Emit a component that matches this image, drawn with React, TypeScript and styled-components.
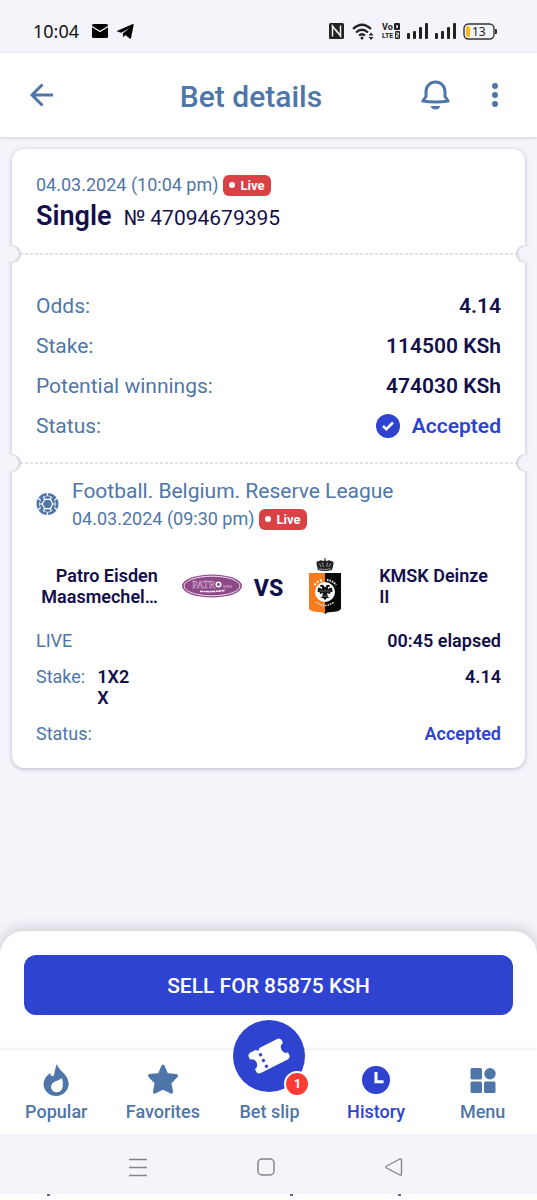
import React from "react";
import styled, { createGlobalStyle } from "styled-components";

const c = {
  page: "#f4f5fa",
  steel: "#4f76a8",
  navy: "#130f4b",
  blue: "#2e43d0",
  red: "#d94144",
};

const GlobalStyle = createGlobalStyle`
  *, *::before, *::after { box-sizing: border-box; }
  body { margin: 0; background: ${c.page}; font-family: Roboto, "Liberation Sans", sans-serif; color: ${c.navy}; }
  button { font-family: inherit; border: 0; padding: 0; background: none; cursor: pointer; }
  svg { display: block; flex: none; }
  h1, h2, p, dl, dd { margin: 0; }
`;

const Page = styled.div`
  min-height: 100vh;
  display: flex;
  flex-direction: column;
`;

const StatusBar = styled.div`
  height: 53px;
  padding: 9px 39px 0 33px;
  display: flex;
  align-items: center;
  justify-content: space-between;
  font: 400 18px/24px "Noto Sans", "Open Sans", sans-serif;
  color: #111;
`;

const StatusGroup = styled.div<{ $gap: number }>`
  display: flex;
  align-items: center;
  gap: ${(p) => p.$gap}px;
`;

const Clock = styled.span`
  margin-right: 4px;
`;

const Header = styled.header`
  height: 84px;
  padding-right: 30px;
  display: flex;
  align-items: center;
  background: #fff;
  box-shadow: 0 1px 3px rgba(30, 30, 60, 0.16);
`;

const HeaderButton = styled.button<{ $width: number }>`
  width: ${(p) => p.$width}px;
  height: 48px;
  display: flex;
  align-items: center;
  justify-content: center;
  color: ${c.steel};
`;

const Actions = styled.div`
  display: flex;
  gap: 32px;
`;

const Title = styled.h1`
  flex: 1;
  padding-top: 4px;
  text-align: center;
  font-size: 30px;
  line-height: 36px;
  font-weight: 500;
  color: ${c.steel};
`;

const Main = styled.main`
  flex: 1;
  padding: 12px 12px 24px;
`;

const Card = styled.article`
  background: #fff;
  border-radius: 12px;
  box-shadow: 0 1px 4px rgba(30, 30, 60, 0.28);
`;

const Summary = styled.section`
  padding: 24px 24px 18px;
`;

const DateRow = styled.div`
  display: flex;
  align-items: center;
  gap: 4px;
  height: 24px;
  font-size: 18px;
  line-height: 24px;
  color: ${c.steel};
`;

const LiveBadge = styled.span`
  height: 21px;
  padding: 0 6px;
  display: inline-flex;
  align-items: center;
  gap: 6px;
  border-radius: 6px;
  background: ${c.red};
  color: #fff;
  font-size: 13px;
  line-height: 21px;
  font-weight: 700;

  &::before {
    content: "";
    width: 6px;
    height: 6px;
    border-radius: 50%;
    background: #fff;
  }
`;

const BetTitle = styled.div`
  display: flex;
  align-items: baseline;
  gap: 12px;
  height: 38px;
  line-height: 38px;
`;

const BetKind = styled.h2`
  font-size: 27px;
  line-height: 38px;
  font-weight: 600;
`;

const BetNumber = styled.span`
  font-size: 21px;
`;

const TearLine = styled.div`
  position: relative;
  height: 2px;
  margin: 0 8px;
  background: repeating-linear-gradient(90deg, #e0e1ea 0 3px, transparent 3px 5px);

  &::before,
  &::after {
    content: "";
    position: absolute;
    top: -8px;
    width: 18px;
    height: 18px;
    border-radius: 50%;
    background: ${c.page};
  }
  &::before { left: -17px; box-shadow: inset -2px 0 2px rgba(30, 30, 60, 0.16); }
  &::after { right: -17px; box-shadow: inset 2px 0 2px rgba(30, 30, 60, 0.16); }
`;

const Totals = styled.dl`
  padding: 31px 24px 16px;
`;

const TotalRow = styled.div`
  height: 40px;
  display: flex;
  align-items: center;
  justify-content: space-between;
  font-size: 21px;
  line-height: 26px;
`;

const Label = styled.dt`
  color: ${c.steel};
`;

const Value = styled.dd<{ $accent?: boolean }>`
  display: flex;
  align-items: center;
  gap: 12px;
  font-weight: 600;
  color: ${(p) => (p.$accent ? c.blue : c.navy)};
`;

const Event = styled.section`
  padding: 12px 24px 24px;
`;

const League = styled.div`
  display: flex;
  align-items: center;
  gap: 13px;
`;

const LeagueName = styled.h2`
  font-size: 21px;
  line-height: 31px;
  font-weight: 400;
  color: ${c.steel};
`;

const Match = styled.div`
  margin-top: 25px;
  display: grid;
  grid-template-columns: minmax(0, 1fr) 60px auto 60px minmax(0, 1fr);
  align-items: center;
  height: 60px;
`;

const Team = styled.p<{ $side: "home" | "away" }>`
  text-align: ${(p) => (p.$side === "home" ? "right" : "left")};
  padding: ${(p) => (p.$side === "home" ? "0 24px 0 0" : "0 0 0 24px")};
  font-size: 18px;
  line-height: 21px;
  font-weight: 600;
  white-space: nowrap;
`;

const Crest = styled.div`
  display: flex;
  justify-content: center;
`;

const Versus = styled.span`
  padding: 6px 12px 0;
  font-size: 23px;
  line-height: 28px;
  font-weight: 800;
  text-align: center;
`;

const Facts = styled.dl`
  display: flex;
  flex-direction: column;
  gap: 15px;
  padding-top: 14px;
`;

const FactRow = styled.div`
  display: flex;
  align-items: flex-start;
  justify-content: space-between;
  font-size: 18px;
  line-height: 21px;
`;

const Pick = styled.div`
  display: flex;
  gap: 12px;
`;

const PickValue = styled.dd`
  font-weight: 600;
`;

const SellSheet = styled.section`
  padding: 24px 24px 35px;
  background: #fff;
  border-radius: 24px 24px 0 0;
  box-shadow: 0 -2px 14px rgba(30, 30, 50, 0.2);
`;

const SellButton = styled.button`
  width: 100%;
  height: 60px;
  padding-top: 2px;
  border-radius: 12px;
  background: ${c.blue};
  color: #fff;
  font-size: 21px;
  line-height: 24px;
  font-weight: 500;
`;

const Nav = styled.nav`
  position: relative;
  height: 84px;
  padding: 0 1px 10px 3px;
  display: grid;
  grid-template-columns: repeat(5, 1fr);
  align-items: end;
  background: #fff;
  box-shadow: 0 -1px 3px rgba(30, 30, 60, 0.1);
`;

const NavItem = styled.a<{ $active?: boolean; $raised?: boolean }>`
  display: flex;
  flex-direction: column;
  align-items: center;
  gap: ${(p) => (p.$raised ? 8 : 4)}px;
  margin-top: ${(p) => (p.$raised ? -30 : 0)}px;
  font-size: 18px;
  line-height: 24px;
  font-weight: 500;
  text-decoration: none;
  color: ${(p) => (p.$active ? c.blue : c.steel)};
`;

const SlipCircle = styled.span`
  position: relative;
  width: 72px;
  height: 72px;
  display: flex;
  align-items: center;
  justify-content: center;
  border-radius: 50%;
  background: ${c.blue};
`;

const SlipCount = styled.span`
  position: absolute;
  right: -5px;
  bottom: -5px;
  width: 26px;
  height: 26px;
  border: 2px solid #fff;
  border-radius: 50%;
  background: #fb3b34;
  color: #fff;
  font-size: 13px;
  line-height: 22px;
  font-weight: 700;
  text-align: center;
`;

const SystemBar = styled.div`
  height: 60px;
  display: grid;
  grid-template-columns: 1fr 28px 1fr;
  align-items: center;
  padding: 6px 129px 0 124px;
`;

const SystemButton = styled.button<{ $align: "start" | "center" | "end" }>`
  width: 28px;
  height: 28px;
  display: flex;
  align-items: center;
  justify-content: center;
  justify-self: ${(p) => p.$align};
`;

const BottomEdge = styled.div`
  height: 6px;
  padding: 0 136px 0 47px;
  display: grid;
  grid-template-columns: 9fr 4fr 3px;
  background: #fff;
`;

const Speck = styled.span`
  width: 3px;
  height: 2px;
  background: #5c668f;
`;

const SignalIcon = () => (
  <svg width="21" height="16" viewBox="0 0 21 16" fill="#222">
    <rect x="0" y="10" width="3" height="6" rx="1" />
    <rect x="6" y="8" width="3" height="8" rx="1" />
    <rect x="12" y="4" width="3" height="12" rx="1" />
    <rect x="18" y="0" width="3" height="16" rx="1" />
  </svg>
);

const VolteIcon = () => (
  <svg width="18" height="18" viewBox="0 -1 18 18" fill="#222" fontFamily="'Liberation Sans Narrow', Roboto, sans-serif" fontWeight="700">
    <text x="0" y="7" fontSize="9">Vo</text>
    <rect x="12" y="0" width="6" height="7" rx="1" />
    <path d="M14.300 2h.8c1.200 0 1.200 3.200 0 3.200h-.8z" fill={c.page} />
    <text x="0" y="15" fontSize="7">LTE</text>
    <rect x="13" y="8" width="5" height="8" rx="1" />
    <path d="M14 10h2.500v2H14.500v2h2.500" fill="none" stroke={c.page} />
  </svg>
);

const FootballIcon = () => (
  <svg width="23" height="24" viewBox="-12 -12 24 24">
    <circle r="11.500" fill={c.steel} />
    <g stroke="#fff" strokeWidth="1.300" fill="none">
      <path d="M-2.800-4.800h5.600L5.600 0 2.800 4.800h-5.600L-5.600 0z" />
      <path d="M-2.800-4.800-4.300-7.500M2.800-4.800l1.500-2.700M5.600 0h3M2.800 4.800l1.500 2.700M-2.800 4.800l-1.500 2.700M-5.600 0h-3" />
      <path d="M-4.300-7.500 0-8.600l4.300 1.100M8.600 0 7.400-4.300M8.600 0 7.400 4.300M4.300 7.500 0 8.600l-4.300-1.100M-8.600 0l1.200-4.300M-8.600 0l1.200 4.300" strokeWidth=".6" />
      <path d="M0-8.500V-12M0 8.500V12M7.400-4.300l2.900-1.700M7.400 4.300l2.900 1.700M-7.400-4.300l-2.900-1.700M-7.400 4.300l-2.900 1.700" />
    </g>
  </svg>
);

const PatroCrest = () => (
  <svg width="60" height="24" viewBox="0 0 60 24" role="img" aria-label="Patro Eisden Maasmechelen">
    <ellipse cx="30" cy="12" rx="30" ry="11.500" fill="#8d4888" />
    <ellipse cx="30" cy="12" rx="28" ry="9.800" fill="none" stroke="#f0dff0" />
    <text x="10" y="14" fontFamily="Liberation Serif, serif" fontSize="10" fill="none" stroke="#cfa9cc" strokeWidth=".5">PATR</text>
    <circle cx="36.500" cy="10.500" r="3" fill="#fff" />
    <path d="m36.500 8.800 1.500 1.100-.5 1.800h-2l-.5-1.800z" fill="#73366f" />
    <text x="41" y="14" fontFamily="Liberation Serif, serif" fontSize="5" fill="#d9b9d7">MM</text>
    <path d="M18 17.200c8 .8 17 .5 25-1" fill="none" stroke="#fff" strokeWidth="1.500" strokeDasharray="3 .6 2 .5" />
  </svg>
);

const DeinzeCrest = () => (
  <svg width="36" height="56" viewBox="0 0 36 56" role="img" aria-label="KMSK Deinze">
    <path d="M11 12 9.500 6q-.5-3 2.500-3 2-1.500 4 0l1.500-.5V0h1v2.500L20 3q2-1.500 4 0 3 0 2.500 3L25 12q-7 2-14 0z" fill="#222" />
    <path d="M12.500 5.500 14 9m1.500-4.500.8 4.500M20.500 4.500l-.8 4.500m3.800-3.500L22 9M12 10.800q6 1.500 12 0" fill="none" stroke="#ddd" strokeWidth=".6" />
    <path d="M2 15h16v41q-2-2-6-2-8 0-10-3z" fill="#f57b1c" />
    <path d="M18 15h16v36q-2 3-10 3-4 0-6 2z" fill="#090909" />
    <path d="M7.500 27a12 12 0 0 1 9-5" fill="none" stroke="#fff" strokeWidth="2" strokeDasharray="2 1.500" />
    <path d="M20 22a12 12 0 0 1 9 5" fill="none" stroke="#eee" strokeWidth="2" strokeDasharray="1.500 1" />
    <path d="M9 44q9 7 18 0" fill="none" stroke="#ddd" strokeWidth="1.500" strokeDasharray="1.500 1" />
    <circle cx="18" cy="34" r="10" fill="#fff" />
    <path d="M17.500 29q-1-3-3.500-2-1.500.5-1 1.500l2 .5v2q-3-2-4-1l-.5 4 2 0 .5 2 3-1-1 4-2 1h3l2 2 2-2h3l-2-1-1-4 3 1 .5-2h2l-.5-4q-1-1-4 1v-2l2-.5q.5-1-1-1.500-2.500-1-3.500 2z" fill="#111" />
    <path d="M12.500 33h11M14.500 38h7" stroke="#9b9b8d" strokeWidth=".6" />
  </svg>
);

const Live = () => <LiveBadge>Live</LiveBadge>;

const totals = [
  { label: "Odds:", value: "4.14" },
  { label: "Stake:", value: "114500 KSh" },
  { label: "Potential winnings:", value: "474030 KSh" },
];

export default function App() {
  return (
    <>
      <GlobalStyle />
      <Page>
        <StatusBar>
          <StatusGroup $gap={9}>
            <Clock>10:04</Clock>
            <svg width="16" height="14" viewBox="0 0 16 14">
              <rect width="16" height="14" rx="1.500" fill="#000" />
              <path d="m0 2.500 8 5 8-5" fill="none" stroke={c.page} strokeWidth="1.200" />
            </svg>
            <svg width="17" height="15" viewBox="0 0 17 15" fill="#000">
              <path d="M.5 6.800 15.800.1q1-.3.9.8L14 14q-.3 1-1.300.4L8.500 11l-2 2.200-.8-3.700L12.500 4 4.300 8.800.6 7.700q-.8-.5-.1-.9z" />
            </svg>
          </StatusGroup>
          <StatusGroup $gap={7}>
            <svg width="16" height="16" viewBox="0 0 16 16">
              <rect width="15" height="16" rx="1.500" fill="#222" />
              <path d="M3.500 13.500V3l5 6.500M11.500 2.500V13l-5-6.500" fill="none" stroke={c.page} strokeWidth="1.500" />
            </svg>
            <svg width="23" height="17" viewBox="0 0 23 17" fill="none" stroke="#222" strokeWidth="2.200">
              <path d="M1 6q9-8.500 18 0M4 9.500q6-5.500 12 0M7 12.500q3-2.500 6 0" />
              <circle cx="10" cy="15" r="1.500" fill="#222" stroke="none" />
              <path d="m16.500 12.500 2.500-3 2.500 3zM16.500 14l2.500 3 2.500-3z" fill="#222" stroke="none" />
            </svg>
            <VolteIcon />
            <SignalIcon />
            <SignalIcon />
            <svg width="35" height="17" viewBox="0 0 35 17">
              <rect x="1" y="1" width="30" height="15" rx="4.500" fill="none" stroke="#333" strokeWidth="1.400" />
              <rect x="3" y="3" width="4" height="11" rx="1.500" fill="#f9b91b" />
              <path d="M32 6h1q1 0 1 1v3q0 1-1 1h-1z" fill="#333" />
              <text x="9" y="13" fontFamily="Noto Sans, sans-serif" fontSize="12" fill="#222">13</text>
            </svg>
          </StatusGroup>
        </StatusBar>

        <Header>
          <HeaderButton $width={82} aria-label="Back">
            <svg width="24" height="24" viewBox="0 0 24 24" fill="none" stroke="currentColor" strokeWidth="3">
              <path d="M24 12H3M13.500 1.500 3 12l10.500 10.500" />
            </svg>
          </HeaderButton>
          <Title>Bet details</Title>
          <Actions>
            <HeaderButton $width={31} aria-label="Notifications">
              <svg width="29" height="30" viewBox="0 0 29 30" fill="none" stroke="currentColor" strokeWidth="3" strokeLinejoin="round">
                <path d="M5 16.500V11.500a9.500 9.500 0 0 1 19 0v5l3.200 4.500q-6 1-12.700 1T1.800 21z" />
                <path d="M9.500 26h10q-1.500 3.500-5 3.500T9.500 26z" fill="currentColor" stroke="none" />
              </svg>
            </HeaderButton>
            <HeaderButton $width={24} aria-label="More">
              <svg width="6" height="24" viewBox="0 0 6 24" fill="currentColor">
                <circle cx="3" cy="3" r="3" />
                <circle cx="3" cy="12" r="3" />
                <circle cx="3" cy="21" r="3" />
              </svg>
            </HeaderButton>
          </Actions>
        </Header>

        <Main>
          <Card>
            <Summary>
              <DateRow>
                04.03.2024 (10:04 pm) <Live />
              </DateRow>
              <BetTitle>
                <BetKind>Single</BetKind>
                <BetNumber>№ 47094679395</BetNumber>
              </BetTitle>
            </Summary>
            <TearLine />
            <Totals>
              {totals.map((t) => (
                <TotalRow key={t.label}>
                  <Label>{t.label}</Label>
                  <Value>{t.value}</Value>
                </TotalRow>
              ))}
              <TotalRow>
                <Label>Status:</Label>
                <Value $accent>
                  <svg width="24" height="24" viewBox="0 0 24 24">
                    <circle cx="12" cy="12" r="12" fill={c.blue} />
                    <path d="m7 12 3.300 3.200 6.700-6.700" fill="none" stroke="#fff" strokeWidth="2.500" />
                  </svg>
                  Accepted
                </Value>
              </TotalRow>
            </Totals>
            <TearLine />
            <Event>
              <League>
                <FootballIcon />
                <div>
                  <LeagueName>Football. Belgium. Reserve League</LeagueName>
                  <DateRow>
                    04.03.2024 (09:30 pm) <Live />
                  </DateRow>
                </div>
              </League>
              <Match>
                <Team $side="home">
                  Patro Eisden
                  <br />
                  Maasmechel…
                </Team>
                <Crest>
                  <PatroCrest />
                </Crest>
                <Versus>VS</Versus>
                <Crest>
                  <DeinzeCrest />
                </Crest>
                <Team $side="away">
                  KMSK Deinze
                  <br />
                  II
                </Team>
              </Match>
              <Facts>
                <FactRow>
                  <Label>LIVE</Label>
                  <Value>00:45 elapsed</Value>
                </FactRow>
                <FactRow>
                  <Pick>
                    <Label>Stake:</Label>
                    <PickValue>
                      1X2
                      <br />X
                    </PickValue>
                  </Pick>
                  <Value>4.14</Value>
                </FactRow>
                <FactRow>
                  <Label>Status:</Label>
                  <Value $accent>Accepted</Value>
                </FactRow>
              </Facts>
            </Event>
          </Card>
        </Main>

        <SellSheet>
          <SellButton>SELL FOR 85875 KSH</SellButton>
        </SellSheet>

        <Nav>
          <NavItem href="#popular">
            <svg width="32" height="32" viewBox="0 0 32 32">
              <path d="M17 0q-1 2-1.500 4t-1.500 7q-.5 2-2 1-2-1-2-3-6.500 5-6.500 11.500A12.500 12.500 0 0 0 16 32a12.500 12.500 0 0 0 12.700-12Q28.700 14 23 8.500 18 4 17 0z" fill="currentColor" />
              <path d="M22 14q-2 1.800-5 2.700-6 1.800-6 6.300a5.500 5.500 0 0 0 5.500 5.300q5.500 0 6.300-6.300.5-4-.8-8z" fill="#fff" />
            </svg>
            Popular
          </NavItem>
          <NavItem href="#favorites">
            <svg width="32" height="32" viewBox="0 0 32 32">
              <path d="m16 2.500 3.500 8.300 9.700 1-6.500 7 1.600 9.200L16 23.800 7.700 28l1.600-9.200-6.500-7 9.700-1z" fill="currentColor" stroke="currentColor" strokeWidth="3.500" strokeLinejoin="round" />
            </svg>
            Favorites
          </NavItem>
          <NavItem href="#betslip" $raised>
            <SlipCircle>
              <svg width="44" height="36" viewBox="-22 -18 44 36">
                <g transform="rotate(-27)">
                  <path d="M-15-11.500h30q3 0 3.500 3v3q-4.500 1-4.500 5.500t4.500 5.500v3q-.5 3-3.500 3h-30q-3 0-3.500-3v-3q4.500-1 4.500-5.500t-4.500-5.500v-3q.5-3 3.500-3z" fill="#fff" />
                  <path d="M-7-12v24" stroke={c.blue} strokeWidth="3" strokeDasharray="3 3.500" strokeDashoffset="1" />
                </g>
              </svg>
              <SlipCount>1</SlipCount>
            </SlipCircle>
            Bet slip
          </NavItem>
          <NavItem href="#history" $active>
            <svg width="32" height="32" viewBox="0 0 32 32">
              <circle cx="16" cy="16" r="14" fill="currentColor" />
              <path d="M16 8v9.700h7.500" fill="none" stroke="#fff" strokeWidth="3" />
            </svg>
            History
          </NavItem>
          <NavItem href="#menu">
            <svg width="32" height="32" viewBox="0 0 32 32" fill="currentColor">
              <rect x="3.500" y="4" width="11.500" height="11.500" rx="1.500" />
              <circle cx="23" cy="9.700" r="5.700" />
              <rect x="3.500" y="17.500" width="11.500" height="11.500" rx="1.500" />
              <rect x="17" y="17.500" width="11.500" height="11.500" rx="1.500" />
            </svg>
            Menu
          </NavItem>
        </Nav>

        <SystemBar>
          <SystemButton $align="start" aria-label="Recent apps">
            <svg width="18" height="19" viewBox="0 0 18 19" stroke="#858589" strokeWidth="1.500">
              <path d="M0 1.500h18M0 9.500h18M0 17.500h18" />
            </svg>
          </SystemButton>
          <SystemButton $align="center" aria-label="Home">
            <svg width="18" height="18" viewBox="0 0 18 18" fill="none" stroke="#858589" strokeWidth="1.500">
              <rect x="1" y="1" width="16" height="16" rx="4" />
            </svg>
          </SystemButton>
          <SystemButton $align="end" aria-label="System back">
            <svg width="18" height="18" viewBox="0 0 18 18" fill="none" stroke="#858589" strokeWidth="1.400" strokeLinejoin="round">
              <path d="M1.500 8 15 1q1.500-.5 1.500 1v14q0 1.500-1.500 1L1.500 10q-1.200-1 0-2z" />
            </svg>
          </SystemButton>
        </SystemBar>
        <BottomEdge>
          <Speck />
          <Speck />
          <Speck />
        </BottomEdge>
      </Page>
    </>
  );
}
